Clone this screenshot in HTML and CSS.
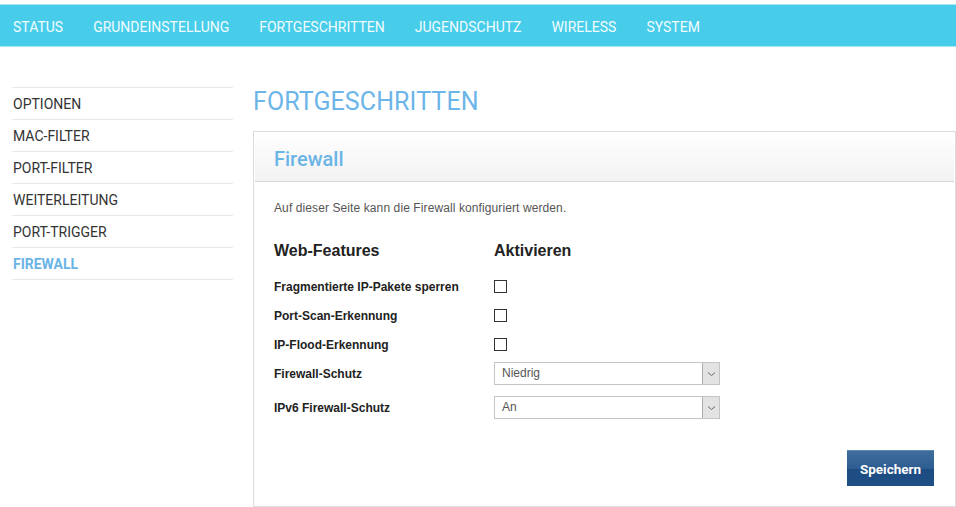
FILE: index.html
```html
<!DOCTYPE html>
<html lang="de">
<head>
<meta charset="utf-8">
<title>Firewall</title>
<link rel="stylesheet" href="styles.css">
</head>
<body>
<nav class="topbar">
  <a class="topbar-item">STATUS</a>
  <a class="topbar-item">GRUNDEINSTELLUNG</a>
  <a class="topbar-item">FORTGESCHRITTEN</a>
  <a class="topbar-item">JUGENDSCHUTZ</a>
  <a class="topbar-item">WIRELESS</a>
  <a class="topbar-item">SYSTEM</a>
</nav>
<div class="layout">
  <ul class="sidenav">
    <li class="sidenav-item">OPTIONEN</li>
    <li class="sidenav-item">MAC-FILTER</li>
    <li class="sidenav-item">PORT-FILTER</li>
    <li class="sidenav-item">WEITERLEITUNG</li>
    <li class="sidenav-item">PORT-TRIGGER</li>
    <li class="sidenav-item active">FIREWALL</li>
  </ul>
  <main class="content">
    <h1 class="page-title">FORTGESCHRITTEN</h1>
    <section class="panel">
      <div class="panel-head"><h2 class="panel-title">Firewall</h2></div>
      <div class="panel-body">
        <p class="desc">Auf dieser Seite kann die Firewall konfiguriert werden.</p>
        <div class="row row-head">
          <div class="label">Web-Features</div>
          <div class="field">Aktivieren</div>
        </div>
        <div class="row row-check">
          <div class="label">Fragmentierte IP-Pakete sperren</div>
          <div class="field"><span class="checkbox"></span></div>
        </div>
        <div class="row row-check">
          <div class="label">Port-Scan-Erkennung</div>
          <div class="field"><span class="checkbox"></span></div>
        </div>
        <div class="row row-check">
          <div class="label">IP-Flood-Erkennung</div>
          <div class="field"><span class="checkbox"></span></div>
        </div>
        <div class="row row-select first">
          <div class="label">Firewall-Schutz</div>
          <div class="field">
            <div class="select"><span class="select-value">Niedrig</span><span class="select-arrow"><svg width="9" height="6" viewBox="0 0 9 6"><path d="M1 1.5 L4.5 4.5 L8 1.5" fill="none" stroke="#666" stroke-width="1"/></svg></span></div>
          </div>
        </div>
        <div class="row row-select second">
          <div class="label">IPv6 Firewall-Schutz</div>
          <div class="field">
            <div class="select"><span class="select-value">An</span><span class="select-arrow"><svg width="9" height="6" viewBox="0 0 9 6"><path d="M1 1.5 L4.5 4.5 L8 1.5" fill="none" stroke="#666" stroke-width="1"/></svg></span></div>
          </div>
        </div>
        <div class="actions">
          <button class="btn-save">Speichern</button>
        </div>
      </div>
    </section>
  </main>
</div>
</body>
</html>
```

FILE: styles.css
```css
* { box-sizing: border-box; }
html, body { margin: 0; padding: 0; background: #fff; }
body { font-family: "Liberation Sans", Arial, sans-serif; color: #333; }

.topbar {
  margin-top: 4px;
  background: #47cdea;
  border-top: 1px solid #a6e6f5;
  border-bottom: 1px solid #a6e6f5;
  height: 43px;
  display: flex;
  padding-left: 13px;
  gap: 30px;
}
.topbar-item {
  font-family: Roboto, sans-serif;
  font-size: 14px;
  color: #f2fcfe;
  line-height: 37px;
  padding-top: 4px;
  text-decoration: none;
}

.layout {
  display: flex;
  margin-top: 40px;
  padding-left: 12px;
  gap: 20px;
}

.sidenav {
  list-style: none;
  margin: 0;
  padding: 0;
  width: 221px;
  flex: none;
  border-bottom: 1px solid #e8e8e8;
  align-self: flex-start;
}
.sidenav-item {
  font-family: Roboto, sans-serif;
  font-size: 14px;
  color: #333;
  border-top: 1px solid #e8e8e8;
  padding-top: 1px;
  line-height: 30px;
  padding-left: 1px;
}
.sidenav-item.active {
  color: #6ab4e6;
  font-weight: bold;
}

.content { flex: 1; min-width: 0; }

.page-title {
  margin: 0 0 14px 0;
  font-family: Roboto, sans-serif;
  font-weight: 400;
  font-size: 25px;
  line-height: 30px;
  color: #6cb5e8;
  letter-spacing: 0.1px;
}

.panel {
  border: 1px solid #dcdcdc;
}
.panel-head {
  margin: 0 1px;
  background: linear-gradient(#ffffff, #f2f2f2);
  border-bottom: 1px solid #d8d8d8;
  padding: 15px 19px 10px;
}
.panel-title {
  margin: 0;
  font-family: Roboto, sans-serif;
  font-weight: 500;
  font-size: 20px;
  line-height: 24px;
  color: #6ab4e6;
}

.panel-body {
  padding: 19px 20px 20px 20px;
}
.desc {
  margin: 0 0 25px 0;
  font-size: 12px;
  line-height: 15px;
  color: #555;
  letter-spacing: 0.1px;
}

.row {
  display: flex;
  align-items: center;
}
.label {
  width: 220px;
  flex: none;
  font-size: 12px;
  font-weight: bold;
  color: #222;
}
.row-head { height: 20px; margin-bottom: 11px; }
.row-head .label, .row-head .field {
  font-size: 16px;
  font-weight: bold;
  color: #222;
  line-height: 20px;
}
.row-check { height: 29px; }
.row-select { height: 27px; }
.row-select.first { margin-top: 1px; }
.row-select.second { margin-top: 7px; }

.checkbox {
  display: block;
  width: 13px;
  height: 13px;
  border: 1px solid #333;
  background: #fff;
}

.select {
  display: flex;
  width: 226px;
  height: 23px;
  border: 1px solid #c4c4c4;
  background: #fff;
  align-items: stretch;
}
.select-value {
  flex: 1;
  font-size: 12px;
  color: #555;
  line-height: 21px;
  padding-left: 7px;
}
.select-arrow {
  width: 17px;
  flex: none;
  background: #e3e3e3;
  border-left: 1px solid #acacac;
  display: flex;
  align-items: center;
  justify-content: center;
}

.actions {
  display: flex;
  justify-content: flex-end;
  margin-top: 29px;
}
.btn-save {
  width: 87px;
  height: 36px;
  margin-right: 1px;
  border: none;
  border-top: 1px solid #5d88b4;
  background: linear-gradient(#3f6d9c 0%, #2d5d91 50%, #1d4c82 52%, #1f4f86 100%);
  color: #fff;
  font-family: Roboto, sans-serif;
  font-weight: bold;
  font-size: 13.5px;
  padding: 0;
}
```
